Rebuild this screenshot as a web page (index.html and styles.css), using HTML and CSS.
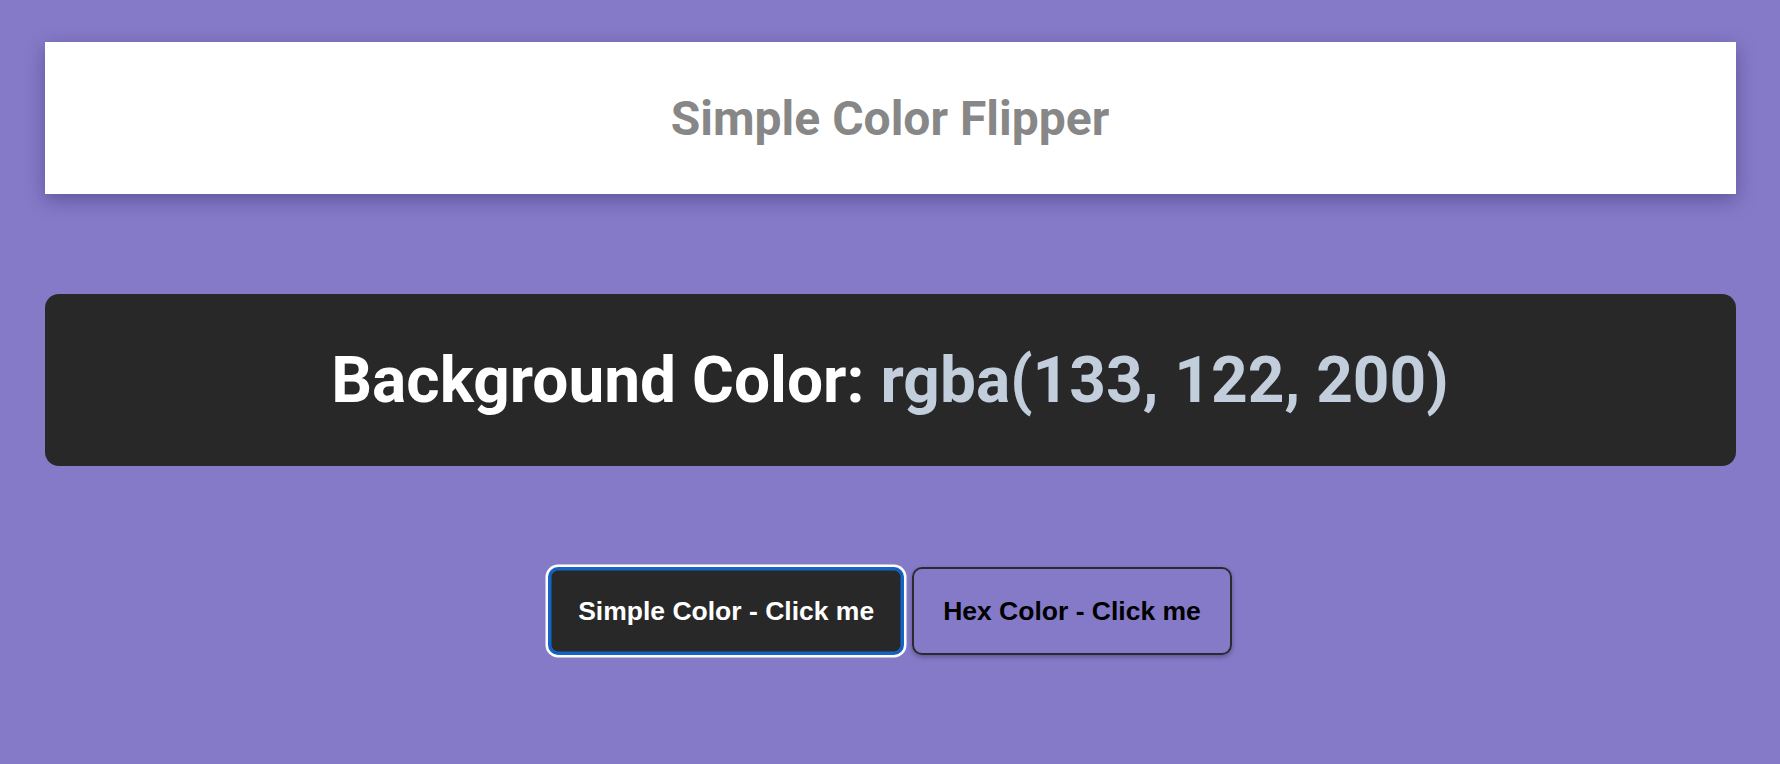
FILE: index.html
```html
<!DOCTYPE html>
<html lang="en">
<head>
<meta charset="utf-8">
<title>Simple Color Flipper</title>
<link rel="stylesheet" href="styles.css">
</head>
<body>
<div class="container">
  <header class="header">
    <h1 class="title">Simple Color Flipper</h1>
  </header>
  <section class="display">
    <h2 class="display-text">Background Color: <span class="color-value">rgba(133, 122, 200)</span></h2>
  </section>
  <div class="buttons">
    <button class="btn btn-simple">Simple Color - Click me</button>
    <button class="btn btn-hex">Hex Color - Click me</button>
  </div>
</div>
</body>
</html>
```

FILE: styles.css
```css
* { box-sizing: border-box; }
html, body { margin: 0; padding: 0; }
body {
  background: #857ac8;
  font-family: Roboto, "Liberation Sans", Arial, sans-serif;
  height: 764px;
  overflow: hidden;
}
.container {
  width: 95%;
  margin: 0 auto;
  padding-top: 42px;
}
.header {
  background: #fff;
  height: 152px;
  display: flex;
  align-items: center;
  justify-content: center;
  box-shadow: 0 6px 18px rgba(40, 30, 90, 0.4);
}
.title {
  margin: 0;
  font-family: Roboto, sans-serif;
  font-weight: 700;
  font-size: 48px;
  color: #878787;
}
.display {
  margin-top: 100px;
  height: 172px;
  background: #282828;
  border-radius: 14px;
  display: flex;
  align-items: center;
  justify-content: center;
}
.display-text {
  margin: 0;
  font-family: Roboto, sans-serif;
  font-weight: 700;
  font-size: 64px;
  color: #fff;
}
.color-value { color: #c2cedc; }
.buttons {
  margin-top: 101px;
  display: flex;
  justify-content: center;
  gap: 8px;
}
.btn {
  font-family: "Liberation Sans", Arial, sans-serif;
  font-weight: 700;
  font-size: 26.5px;
  padding: 27px 28px;
  height: 88px;
  border-radius: 10px;
  border: 2px solid #2b2a31;
  cursor: pointer;
}
.btn-simple {
  background: #282828;
  color: #fff;
  border-color: #1565c8;
  box-shadow: inset 0 0 0 1.5px #1565c8, 0 0 0 2.5px #fff;
}
.btn-hex {
  background: transparent;
  color: #000;
  padding: 27px 29px;
  box-shadow: 0 2px 5px rgba(0, 0, 0, 0.3);
}
```
